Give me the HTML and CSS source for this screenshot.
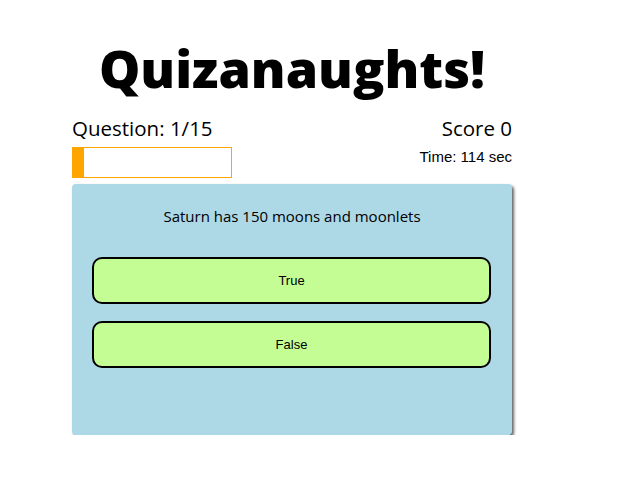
FILE: index.html
```html
<!DOCTYPE html>
<html>
<head>
<meta charset="utf-8">
<link rel="stylesheet" href="styles.css">
</head>
<body>
<div class="app">
  <h1 class="title">Quizanaughts!</h1>
  <div class="hud">
    <div class="hud-left">
      <div class="hud-big">Question: 1/15</div>
      <div class="progress"><div class="progress-fill" style="width: 12px"></div></div>
    </div>
    <div class="hud-right">
      <div class="hud-big">Score 0</div>
      <div class="timer">Time: 114 sec</div>
    </div>
  </div>
  <div class="card">
    <div class="question">Saturn has 150 moons and moonlets</div>
    <div class="answers">
      <button class="answer">True</button>
      <button class="answer">False</button>
    </div>
  </div>
</div>
</body>
</html>
```
FILE: styles.css
```css
html, body { margin: 0; padding: 0; background: #fff; }
body { font-family: "Open Sans", sans-serif; color: #000; }
.app { width: 440px; margin-left: 72px; padding-top: 30px; }
.title {
  margin: 0;
  text-align: center;
  font-family: "Open Sans", sans-serif;
  font-weight: 800;
  font-size: 52px;
  line-height: 76px;
}
.hud { display: flex; justify-content: space-between; margin-top: 8px; }
.hud-left, .hud-right { display: flex; flex-direction: column; }
.hud-right { align-items: flex-end; }
.hud-big { font-family: "Open Sans", sans-serif; font-size: 20.5px; line-height: 28px; }
.progress {
  margin-top: 5px;
  width: 160px; height: 31px;
  box-sizing: border-box;
  box-shadow: inset 0 0 0 1px #ffa500;
  background: #fff;
}
.progress-fill { background: #ffa500; height: 100%; }
.timer { font-family: "Liberation Sans", Arial, sans-serif; font-size: 15px; line-height: 18px; margin-top: 6px; }
.card {
  margin-top: 6px;
  height: 251px;
  background: #add8e6;
  border-radius: 4px;
  box-shadow: 2px 2px 3px #666;
  box-sizing: border-box;
  padding: 22px 20px 0 20px;
}
.question { text-align: center; font-size: 15px; line-height: 20px; }
.answers { display: flex; flex-direction: column; gap: 17px; margin-top: 31px; }
.answer {
  height: 47px;
  background: #c4fd94;
  border: 2px solid #000;
  border-radius: 10px;
  font-family: "Liberation Sans", Arial, sans-serif;
  font-size: 13px;
  color: #000;
  padding: 0;
  margin: 0 1px 0 0;
}
```
